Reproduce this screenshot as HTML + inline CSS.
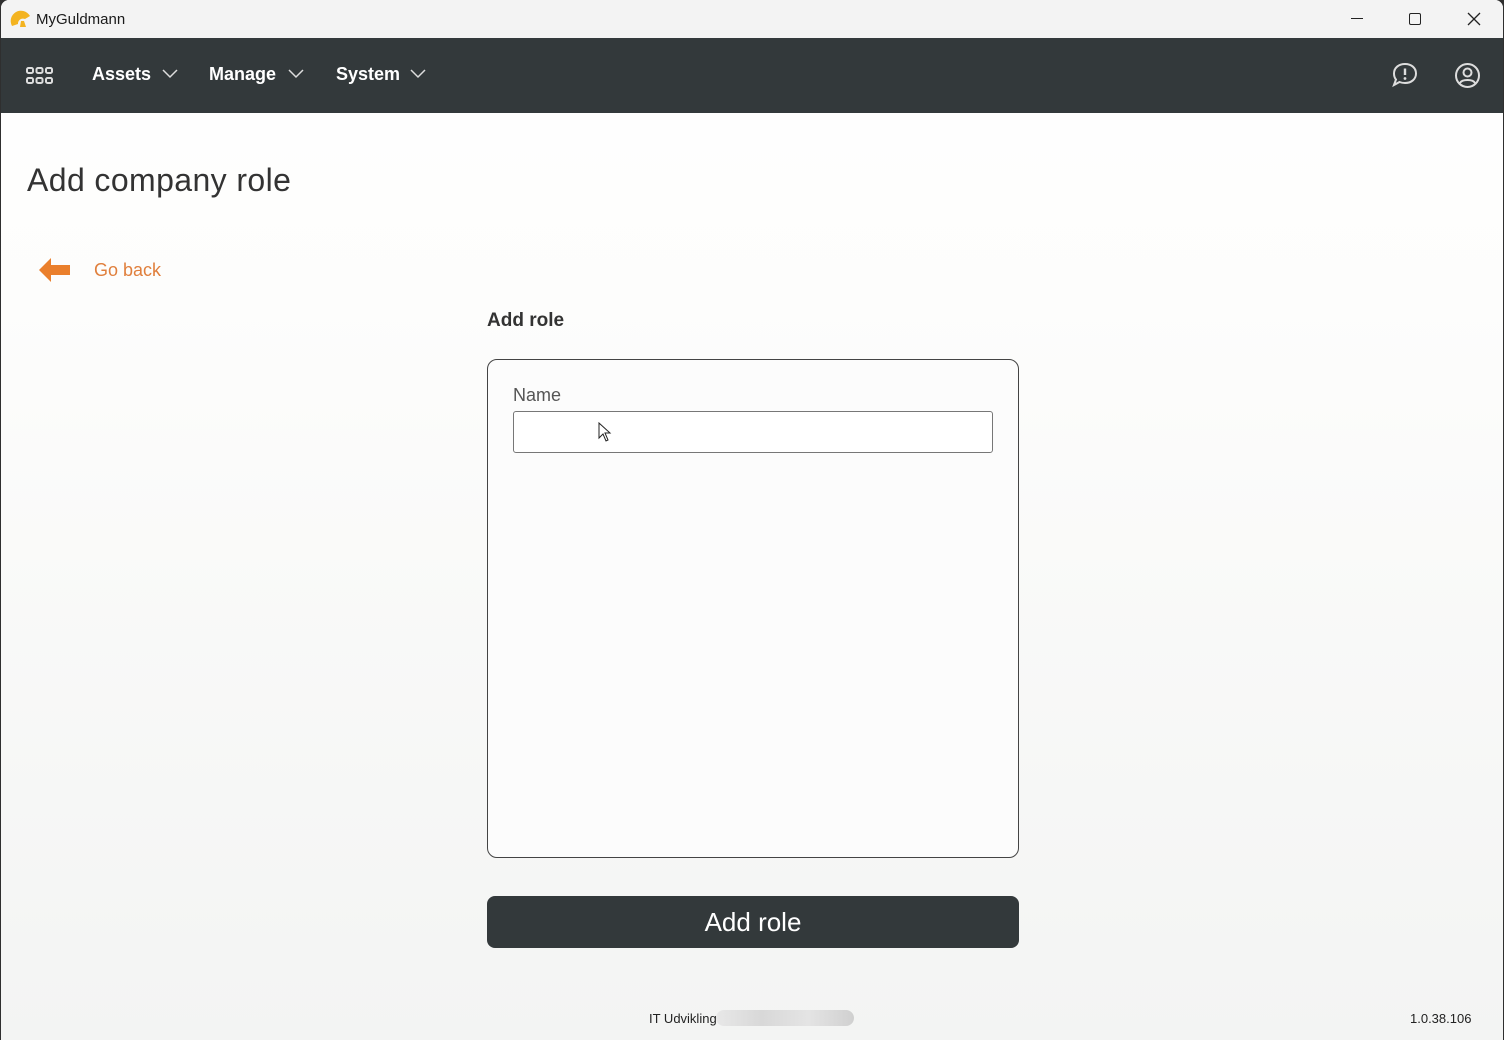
<!DOCTYPE html>
<html><head><style>
*{margin:0;padding:0;box-sizing:border-box}
body{width:1504px;height:1040px;overflow:hidden;font-family:"Liberation Sans",sans-serif;background:#2f2f2f;position:relative}
.win{position:absolute;left:1px;top:0;width:1502px;height:1040px;border-radius:8px 8px 0 0;overflow:hidden;background:linear-gradient(#ffffff 0px,#fdfdfc 300px,#f3f4f3 1040px)}
.title{height:38px;background:#f3f3f3;position:relative;font-size:15px;color:#1a1a1a}
.nav{position:absolute;top:38px;left:0;width:100%;height:75px;background:#33393b;color:#fff}
.nav .item{position:absolute;top:26px;font-weight:bold;font-size:18px}
.abs{position:absolute}
</style></head><body><div class="win">
<div class="title">
<svg class="abs" style="left:9px;top:8px" width="22" height="22" viewBox="0 0 22 22"><path d="M2 18 A9 9 0 0 1 20 8 L15 11 A5 5 0 0 0 8 16 Z" fill="#f3b320"/><path d="M10 19 L11 13 L14 13 L16 19 Z" fill="#f3b320"/></svg>
<span class="abs" style="left:35px;top:11px">MyGuldmann</span>
<div class="abs" style="left:1350px;top:18px;width:12px;height:1px;background:#222"></div>
<div class="abs" style="left:1408px;top:13px;width:12px;height:12px;border:1.5px solid #222;border-radius:2px"></div>
<svg class="abs" style="left:1466px;top:12px" width="14" height="14"><path d="M1 1L13 13M13 1L1 13" stroke="#222" stroke-width="1.3"/></svg>
</div>
<div class="nav">
<svg class="abs" style="left:25px;top:29px" width="27" height="17"><g fill="none" stroke="#ddd" stroke-width="2"><rect x="1" y="1" width="6" height="5" rx="1.5"/><rect x="10.5" y="1" width="6" height="5" rx="1.5"/><rect x="20" y="1" width="6" height="5" rx="1.5"/><rect x="1" y="11" width="6" height="5" rx="1.5"/><rect x="10.5" y="11" width="6" height="5" rx="1.5"/><rect x="20" y="11" width="6" height="5" rx="1.5"/></g></svg>
<span class="item" style="left:91px">Assets</span>
<svg class="abs" style="left:161px;top:31px" width="16" height="10"><path d="M1 1L8 8L15 1" stroke="#ddd" fill="none" stroke-width="1.5"/></svg>
<span class="item" style="left:208px">Manage</span>
<svg class="abs" style="left:287px;top:31px" width="16" height="10"><path d="M1 1L8 8L15 1" stroke="#ddd" fill="none" stroke-width="1.5"/></svg>
<span class="item" style="left:335px">System</span>
<svg class="abs" style="left:409px;top:31px" width="16" height="10"><path d="M1 1L8 8L15 1" stroke="#ddd" fill="none" stroke-width="1.5"/></svg>
<svg class="abs" style="left:1390px;top:24px" width="28" height="26" viewBox="0 0 28 26"><path d="M14 2C20.5 2 25 6 25 11.5S20.5 21 14 21C12 21 10 20.6 8.5 20L3 23 5 17.5C3.5 15.8 3 13.8 3 11.5 3 6 7.5 2 14 2Z" fill="none" stroke="#ddd" stroke-width="2"/><path d="M14 6.5V13" stroke="#ddd" stroke-width="2.4"/><circle cx="14" cy="16.5" r="1.4" fill="#ddd"/></svg>
<svg class="abs" style="left:1453px;top:24px" width="27" height="27" viewBox="0 0 27 27"><circle cx="13.5" cy="13.5" r="11.5" fill="none" stroke="#ddd" stroke-width="2"/><circle cx="13.5" cy="10.5" r="4" fill="none" stroke="#ddd" stroke-width="2"/><path d="M6 21C8 17 19 17 21 21" fill="none" stroke="#ddd" stroke-width="2"/></svg>
</div>
<div class="abs" style="left:26px;top:162px;font-size:32px;letter-spacing:0.4px;color:#333">Add company role</div>
<svg class="abs" style="left:37px;top:256px" width="34" height="28" viewBox="0 0 34 28"><path d="M1 14L13 2V9H32V19H13V26Z" fill="#ea7f2c"/></svg>
<div class="abs" style="left:93px;top:260px;font-size:18px;color:#e07f3c">Go back</div>
<div class="abs" style="left:486px;top:310px;font-size:19px;font-weight:bold;color:#333">Add role</div>
<div class="abs" style="left:486px;top:359px;width:532px;height:499px;border:1px solid #444;border-radius:10px;background:#fcfcfc"></div>
<div class="abs" style="left:512px;top:385px;font-size:18px;color:#555">Name</div>
<div class="abs" style="left:512px;top:411px;width:480px;height:42px;border:1px solid #777;border-radius:3px;background:#fff"></div>
<svg class="abs" style="left:597px;top:422px" width="14" height="20"><path d="M1 1V16L5 12L8 19L10 18L7 11H12Z" fill="#fff" stroke="#222" stroke-width="1"/></svg>
<div class="abs" style="left:486px;top:896px;width:532px;height:52px;background:#33393b;border-radius:8px;color:#fff;font-size:26px;text-align:center;line-height:52px">Add role</div>
<div class="abs" style="left:648px;top:1011px;font-size:13px;color:#222">IT Udvikling</div>
<div class="abs" style="left:715px;top:1010px;width:138px;height:16px;background:linear-gradient(90deg,#e8e8e8,#d8d8d8,#e4e4e4,#d0d0d0);border-radius:8px"></div>
<div class="abs" style="left:1409px;top:1011px;font-size:13px;color:#222">1.0.38.106</div>
</div></body></html>
